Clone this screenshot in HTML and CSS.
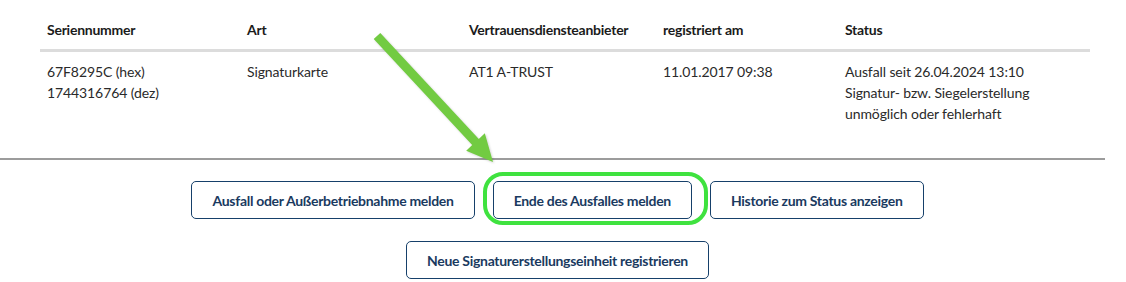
FILE: index.html
```html
<!DOCTYPE html>
<html lang="de">
<head>
<meta charset="utf-8">
<title>Signaturerstellungseinheiten</title>
<link rel="stylesheet" href="styles.css">
</head>
<body>
<div class="page">
  <div class="table-wrap">
    <table class="units">
      <thead>
        <tr>
          <th class="c1">Seriennummer</th>
          <th class="c2">Art</th>
          <th class="c3">Vertrauensdiensteanbieter</th>
          <th class="c4">registriert am</th>
          <th class="c5">Status</th>
        </tr>
      </thead>
      <tbody>
        <tr>
          <td>67F8295C (hex)<br>1744316764 (dez)</td>
          <td>Signaturkarte</td>
          <td>AT1 A-TRUST</td>
          <td>11.01.2017 09:38</td>
          <td>Ausfall seit 26.04.2024 13:10<br>Signatur- bzw. Siegelerstellung<br>unmöglich oder fehlerhaft</td>
        </tr>
      </tbody>
    </table>
  </div>
  <div class="divider"></div>
  <div class="actions">
    <div class="action-row">
      <button class="btn" type="button">Ausfall oder Außerbetriebnahme melden</button>
      <span class="highlight"><button class="btn" type="button">Ende des Ausfalles melden</button></span>
      <button class="btn" type="button">Historie zum Status anzeigen</button>
    </div>
    <div class="action-row">
      <button class="btn" type="button">Neue Signaturerstellungseinheit registrieren</button>
    </div>
  </div>
  <svg class="arrow" width="1126" height="282" viewBox="0 0 1126 282" aria-hidden="true">
    <polygon points="380.3,32.9 478.8,138.9 484.8,133.3 493,162 466.2,150.7 472.2,145.1 373.7,39.1" fill="#72cb42"/>
  </svg>
</div>
</body>
</html>
```
FILE: styles.css
```css
* { box-sizing: border-box; }

body {
  margin: 0;
  background: #ffffff;
  font-family: Lato, "Liberation Sans", sans-serif;
  font-size: 14px;
  color: #2a2a2a;
}

.page {
  position: relative;
  width: 1126px;
  height: 282px;
  overflow: hidden;
}

.table-wrap {
  padding: 20px 0 0 40px;
}

.units {
  width: 1050px;
  border-collapse: collapse;
  table-layout: fixed;
}

.units th,
.units td {
  text-align: left;
  vertical-align: top;
  padding: 0 7px;
  line-height: 21px;
}

.units th {
  font-weight: 700;
  color: #1b1b1b;
  line-height: 20px;
  letter-spacing: -0.25px;
  padding-bottom: 9px;
  border-bottom: 3px solid #dcdcdc;
}

.units td {
  padding-top: 9px;
  letter-spacing: -0.1px;
}

.c1 { width: 200px; }
.c2 { width: 222px; }
.c3 { width: 194px; }
.c4 { width: 182px; }
.c5 { width: 252px; }

.divider {
  margin-top: 34px;
  margin-right: 21px;
  height: 2px;
  background: #9c9c9c;
}

.actions {
  padding: 21px 11px 0 0;
  display: flex;
  flex-direction: column;
  gap: 22px;
}

.action-row {
  display: flex;
  justify-content: center;
  gap: 18px;
}

.btn {
  height: 38px;
  padding: 0 20px;
  border: 1px solid #16406a;
  border-radius: 5px;
  background: #ffffff;
  color: #1a3a5f;
  font-family: Lato, "Liberation Sans", sans-serif;
  font-size: 14px;
  font-weight: 700;
  letter-spacing: -0.3px;
  cursor: pointer;
}

.highlight {
  position: relative;
  display: inline-flex;
}

.highlight::after {
  content: "";
  position: absolute;
  top: -9px;
  left: -10px;
  right: -16px;
  bottom: -6px;
  border: 4px solid #3fe23f;
  border-radius: 20px;
  pointer-events: none;
}

.arrow {
  position: absolute;
  top: 0;
  left: 0;
  pointer-events: none;
  filter: drop-shadow(1px 1px 1px rgba(0, 0, 0, 0.18));
}
```
